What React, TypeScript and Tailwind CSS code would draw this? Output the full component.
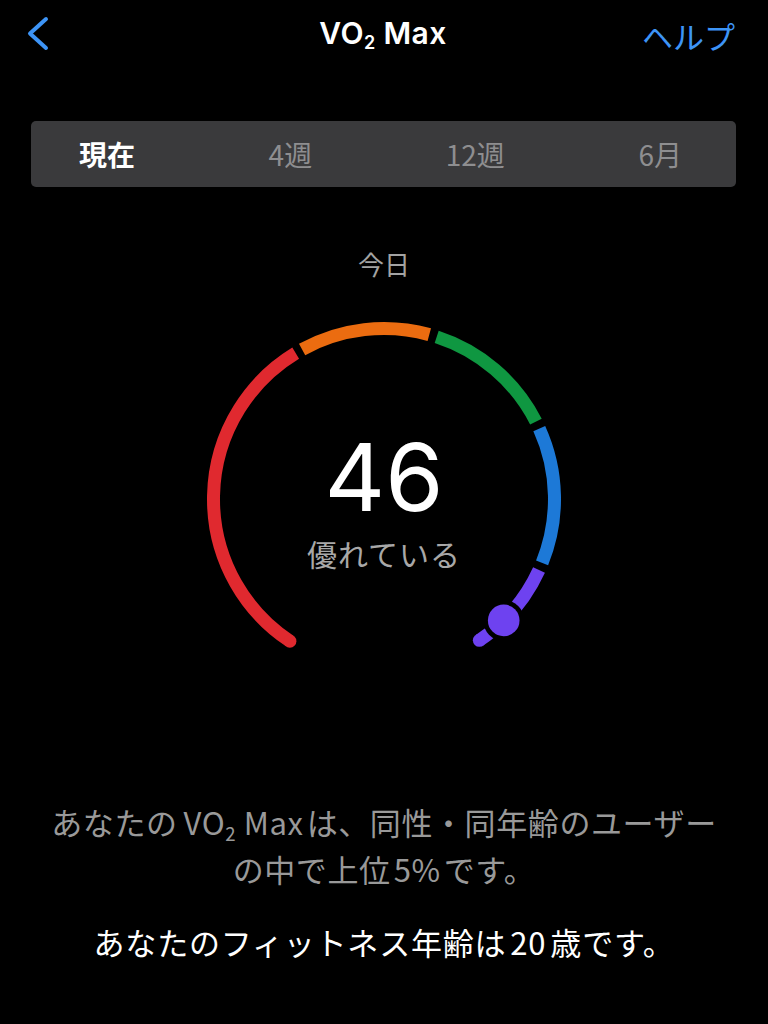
import React from "react";

const CX = 200;
const CY = 200;
const R = 170.5;

function pt(a: number): [number, number] {
  const rad = (a * Math.PI) / 180;
  return [CX + R * Math.cos(rad), CY + R * Math.sin(rad)];
}

function arc(a1: number, a2: number): string {
  const [x1, y1] = pt(a1);
  const [x2, y2] = pt(a2);
  const large = a2 - a1 > 180 ? 1 : 0;
  return `M ${x1.toFixed(2)} ${y1.toFixed(2)} A ${R} ${R} 0 ${large} 1 ${x2.toFixed(2)} ${y2.toFixed(2)}`;
}

const segs: { a1: number; a2: number; c: string }[] = [
  { a1: 123.5, a2: 238.8, c: "#e0292f" },
  { a1: 241.3, a2: 285.4, c: "#eb6c10" },
  { a1: 288.0, a2: 333.0, c: "#0f9741" },
  { a1: 335.6, a2: 382.0, c: "#1d79d7" },
  { a1: 384.6, a2: 416.0, c: "#6e42f0" },
];

function Gauge() {
  const [sx, sy] = pt(123.5);
  const [ex, ey] = pt(416);
  const [mx, my] = pt(405.4);
  return (
    <svg width="400" height="400" viewBox="0 0 400 400">
      {segs.map((s, i) => (
        <path key={i} d={arc(s.a1, s.a2)} stroke={s.c} strokeWidth={13} fill="none" strokeLinecap="butt" />
      ))}
      <circle cx={sx} cy={sy} r={6.5} fill="#e0292f" />
      <circle cx={ex} cy={ey} r={6.5} fill="#6e42f0" />
      <circle cx={mx} cy={my} r={20.5} fill="#000" />
      <circle cx={mx} cy={my} r={15.8} fill="#6e42f0" />
    </svg>
  );
}

function Sub2() {
  return <span className="text-[0.6em] align-[-0.3em]">2</span>;
}

const jp = "font-['Noto_Sans_CJK_JP','Noto_Sans',sans-serif]";

export default function App() {
  return (
    <div className={`w-[768px] h-[1024px] bg-black text-white ${jp} overflow-hidden`}>
      {/* header */}
      <div className="h-[70px] flex items-center justify-between pl-[26px] pr-[33px]">
        <svg width="24" height="36" viewBox="0 0 24 36" className="mt-[-2px]">
          <path d="M20 3 L4 17.5 L20 32" stroke="#3d94f6" strokeWidth="4" fill="none" strokeLinecap="round" strokeLinejoin="round" />
        </svg>
        <div className="font-['Inter',sans-serif] font-semibold text-[30px] leading-none tracking-[0.4px] ml-[74px]">
          VO<Sub2 /> Max
        </div>
        <div className="text-[#3d94f6] text-[31px] leading-none">ヘルプ</div>
      </div>

      {/* segmented */}
      <div className="mt-[51px] mx-[31px] mr-[32px] h-[66px] rounded-[5px] bg-[#3a3a3c] flex items-center justify-between pl-[48px] pr-[54px] text-[28px] leading-none">
        <span className="font-bold text-white">現在</span>
        <span className="text-[#8e8e90]">4週</span>
        <span className="text-[#8e8e90]">12週</span>
        <span className="text-[#8e8e90]">6月</span>
      </div>

      {/* today */}
      <div className="mt-[62px] text-center text-[26px] leading-[30px] text-[#a3a3a3]">今日</div>

      {/* gauge */}
      <div className="mt-[20px] grid justify-center">
        <div className="[grid-area:1/1]">
          <Gauge />
        </div>
        <div className="[grid-area:1/1] flex flex-col items-center pt-[130px]">
          <div className="font-['Inter',sans-serif] text-[94px] leading-[96px] text-white">46</div>
          <div className="mt-[10px] text-[30px] leading-[36px] text-[#a8a8a8] tracking-[1px]">優れている</div>
        </div>
      </div>

      {/* bottom text */}
      <div className="mt-[105px] text-center text-[31px] leading-[36px] text-[#999999] tracking-[0.6px]">
        あなたの<span className="ml-[6px] mr-[3px]">VO<Sub2 /> Max</span>は、同性・同年齢のユーザー
        <br />
        の中で上位<span className="mx-[3px]">5%</span>です。
      </div>
      <div className="mt-[37px] text-center text-[31px] leading-[36px] text-white tracking-[0.8px]">
        あなたのフィットネス年齢は<span className="mx-[4px]">20</span>歳です。
      </div>
    </div>
  );
}
